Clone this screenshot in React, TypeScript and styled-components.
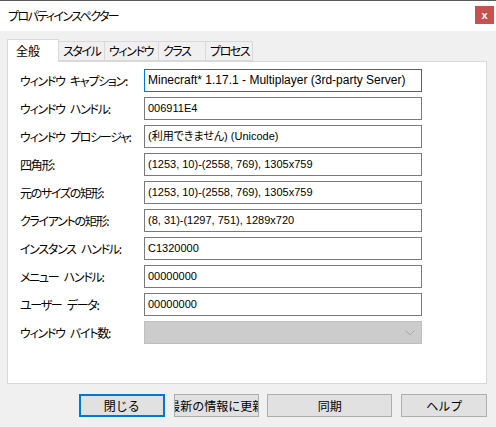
import { Fragment } from "react";
import styled, { createGlobalStyle } from "styled-components";

const GlobalStyle = createGlobalStyle`
  html, body {
    margin: 0;
    padding: 0;
    background: #f0f0f0;
  }
  body {
    font-family: "Noto Sans CJK JP", "Noto Sans", sans-serif;
    font-size: 12px;
    font-feature-settings: "palt";
    color: #000;
  }
`;

const Window = styled.div`
  width: 496px;
  height: 427px;
  box-sizing: border-box;
  border-top: 1px solid #5a5a5a;
  background: #f0f0f0;
  display: flex;
  flex-direction: column;
  overflow: hidden;
`;

const TitleBar = styled.div`
  height: 30px;
  background: #ffffff;
  display: flex;
  align-items: center;
  justify-content: space-between;
  padding-left: 8px;
  padding-right: 2px;
`;

const Title = styled.span`
  font-size: 12px;
  letter-spacing: -1.6px;
  color: #000;
  margin-top: -2px;
`;

const CloseButton = styled.div`
  width: 19px;
  height: 18px;
  background: #c75050;
  color: #fff;
  font-family: "Liberation Sans", sans-serif;
  font-weight: bold;
  font-size: 11px;
  display: flex;
  align-items: center;
  justify-content: center;
  margin-top: -2px;
`;

const Body = styled.div`
  padding: 8px 9px 0 7px;
`;

const TabStrip = styled.div`
  display: flex;
  align-items: flex-end;
  height: 22px;
`;

const Tab = styled.div<{ $active?: boolean; $w: number }>`
  box-sizing: border-box;
  width: ${({ $w }) => $w}px;
  height: ${({ $active }) => ($active ? 23 : 20)}px;
  margin-bottom: ${({ $active }) => ($active ? -1 : 0)}px;
  position: relative;
  z-index: ${({ $active }) => ($active ? 1 : 0)};
  background: ${({ $active }) => ($active ? "#ffffff" : "#f0f0f0")};
  border: 1px solid #d9d9d9;
  border-bottom: ${({ $active }) => ($active ? "none" : "1px solid #d9d9d9")};
  margin-left: ${({ $active }) => ($active ? 0 : -1)}px;
  padding-left: ${({ $active }) => ($active ? 8 : 4)}px;
  padding-top: ${({ $active }) => ($active ? 2 : 0)}px;
  font-size: 12px;
  letter-spacing: ${({ $active }) => ($active ? 0 : -1.4)}px;
  line-height: 18px;
  white-space: nowrap;
`;

const Panel = styled.div`
  box-sizing: border-box;
  height: 323px;
  background: #ffffff;
  border: 1px solid #d9d9d9;
  padding: 7px 0 0 12px;
`;

const Form = styled.div`
  display: grid;
  grid-template-columns: 124px 278px;
  grid-auto-rows: 23px;
  row-gap: 5px;
`;

const Label = styled.div`
  font-size: 12px;
  letter-spacing: -1.3px;
  word-spacing: 4px;
  line-height: 23px;
  color: #000;
  white-space: nowrap;
`;

const Field = styled.div<{ $focused?: boolean }>`
  box-sizing: border-box;
  height: 23px;
  border: 1px solid ${({ $focused }) => ($focused ? "#0078d7" : "#7a7a7a")};
  background: #ffffff;
  padding-left: 3px;
  font-family: "Liberation Sans", "Noto Sans CJK JP", sans-serif;
  font-size: ${({ $focused }) => ($focused ? 12 : 11)}px;
  line-height: 21px;
  white-space: nowrap;
  overflow: hidden;
  color: #000;
`;

const Combo = styled.div`
  box-sizing: border-box;
  height: 23px;
  border: 1px solid #bfbfbf;
  background: #cccccc;
  display: flex;
  align-items: center;
  justify-content: flex-end;
  padding-right: 6px;
`;

const ButtonRow = styled.div`
  display: flex;
  margin-top: 10px;
  padding-left: 72px;
`;

const Button = styled.div<{ $w: number; $default?: boolean; $gap: number }>`
  box-sizing: border-box;
  width: ${({ $w }) => $w}px;
  height: 23px;
  margin-left: ${({ $gap }) => $gap}px;
  background: #e1e1e1;
  border: ${({ $default }) => ($default ? "2px solid #0078d7" : "1px solid #adadad")};
  display: flex;
  align-items: center;
  justify-content: center;
  overflow: hidden;
  white-space: nowrap;
  font-size: 12px;
  font-feature-settings: normal;
  color: #000;
`;

const rows: [string, string][] = [
  ["ウィンドウ キャプション:", "Minecraft* 1.17.1 - Multiplayer (3rd-party Server)"],
  ["ウィンドウ ハンドル:", "006911E4"],
  ["ウィンドウ プロシージャ:", "(利用できません) (Unicode)"],
  ["四角形:", "(1253, 10)-(2558, 769), 1305x759"],
  ["元のサイズの矩形:", "(1253, 10)-(2558, 769), 1305x759"],
  ["クライアントの矩形:", "(8, 31)-(1297, 751), 1289x720"],
  ["インスタンス ハンドル:", "C1320000"],
  ["メニュー ハンドル:", "00000000"],
  ["ユーザー データ:", "00000000"],
];

const tabs: [string, number][] = [
  ["全般", 52],
  ["スタイル", 47],
  ["ウィンドウ", 55],
  ["クラス", 48],
  ["プロセス", 48],
];

export default function App() {
  return (
    <>
      <GlobalStyle />
      <Window>
        <TitleBar>
          <Title>プロパティインスペクター</Title>
          <CloseButton>x</CloseButton>
        </TitleBar>
        <Body>
          <TabStrip>
            {tabs.map(([name, w], i) => (
              <Tab key={name} $active={i === 0} $w={w}>
                {name}
              </Tab>
            ))}
          </TabStrip>
          <Panel>
            <Form>
              {rows.map(([label, value], i) => (
                <Fragment key={i}>
                  <Label>{label}</Label>
                  <Field $focused={i === 0}>{value}</Field>
                </Fragment>
              ))}
              <Label>ウィンドウ バイト数:</Label>
              <Combo>
                <svg width="10" height="6" viewBox="0 0 10 6">
                  <path d="M0.5 0.5 L5 5 L9.5 0.5" fill="none" stroke="#a8a8a8" strokeWidth="1" />
                </svg>
              </Combo>
            </Form>
          </Panel>
          <ButtonRow>
            <Button $w={86} $gap={0} $default>
              閉じる
            </Button>
            <Button $w={86} $gap={9}>
              最新の情報に更新
            </Button>
            <Button $w={126} $gap={8}>
              同期
            </Button>
            <Button $w={86} $gap={9}>
              ヘルプ
            </Button>
          </ButtonRow>
        </Body>
      </Window>
    </>
  );
}
